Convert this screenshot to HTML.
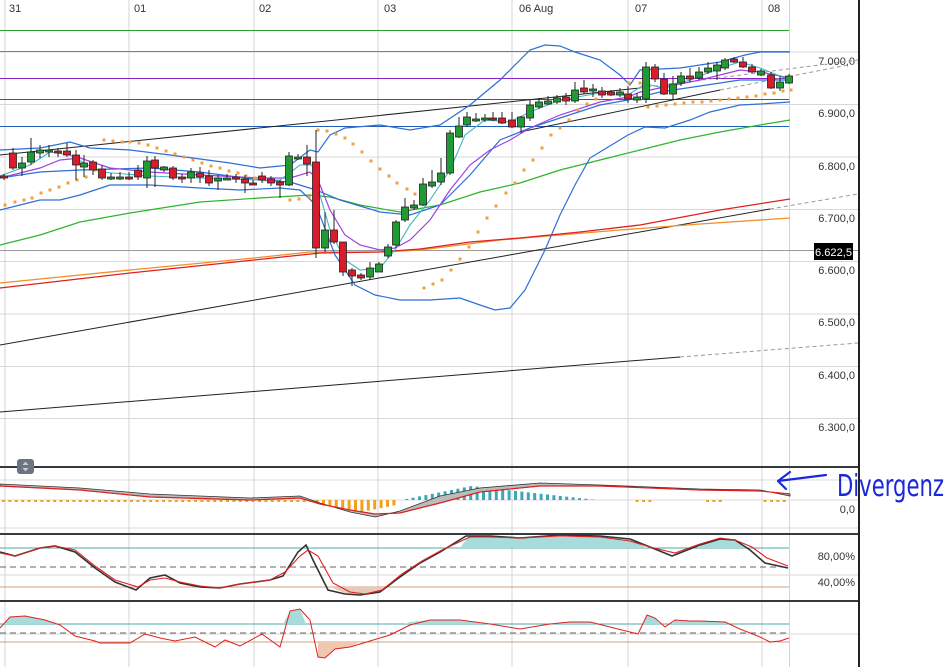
<!DOCTYPE html>
<html><head><meta charset="utf-8"><style>
html,body{margin:0;padding:0;background:#fff;width:946px;height:667px;overflow:hidden}
svg{display:block}
text{font-family:"Liberation Sans",sans-serif;font-size:11px;fill:#333}
</style></head><body>
<svg id="s" width="946" height="667" viewBox="0 0 946 667" xmlns="http://www.w3.org/2000/svg">
<rect width="946" height="667" fill="#fff"/>
<g stroke="#d4d4d8" stroke-width="1">
<line x1="5" y1="0" x2="5" y2="667"/><line x1="129" y1="0" x2="129" y2="667"/><line x1="254" y1="0" x2="254" y2="667"/><line x1="378" y1="0" x2="378" y2="667"/><line x1="512" y1="0" x2="512" y2="667"/><line x1="628" y1="0" x2="628" y2="667"/><line x1="762" y1="0" x2="762" y2="667"/><line x1="789.5" y1="0" x2="789.5" y2="667"/>
</g>
<g stroke="#d8d8d8" stroke-width="1">
<line x1="0" y1="52" x2="858" y2="52"/><line x1="0" y1="104.5" x2="858" y2="104.5"/><line x1="0" y1="157" x2="858" y2="157"/><line x1="0" y1="209.5" x2="858" y2="209.5"/><line x1="0" y1="261.5" x2="858" y2="261.5"/><line x1="0" y1="314" x2="858" y2="314"/><line x1="0" y1="366.5" x2="858" y2="366.5"/><line x1="0" y1="418.5" x2="858" y2="418.5"/>
<line x1="0" y1="480" x2="858" y2="480"/><line x1="0" y1="500" x2="858" y2="500"/><line x1="0" y1="528" x2="858" y2="528"/>
<line x1="0" y1="575" x2="858" y2="575"/><line x1="0" y1="634" x2="858" y2="634"/>
</g>
<line x1="0" y1="250.5" x2="858" y2="250.5" stroke="#999"/>
<line x1="0" y1="30.5" x2="789" y2="30.5" stroke="#2aa02a"/>
<line x1="0" y1="51.5" x2="789" y2="51.5" stroke="#2a9fb0"/>
<line x1="0" y1="78.5" x2="789" y2="78.5" stroke="#8a22c8"/>
<line x1="0" y1="99.5" x2="789" y2="99.5" stroke="#1f5fb8"/>
<line x1="0" y1="126.5" x2="789" y2="126.5" stroke="#1f5fb8"/>
<text x="9" y="12">31</text><text x="134" y="12">01</text><text x="259" y="12">02</text><text x="384" y="12">03</text><text x="519" y="12">06 Aug</text><text x="635" y="12">07</text><text x="768" y="12">08</text>
<g text-anchor="end">
<text x="855" y="65">7.000,0</text><text x="855" y="117">6.900,0</text><text x="855" y="170">6.800,0</text><text x="855" y="222">6.700,0</text><text x="855" y="274">6.600,0</text><text x="855" y="326">6.500,0</text><text x="855" y="379">6.400,0</text><text x="855" y="431">6.300,0</text>
<text x="855" y="513">0,0</text><text x="855" y="560">80,00%</text><text x="855" y="586">40,00%</text>
</g>
<rect x="814" y="243" width="39" height="17" fill="#000"/>
<text x="815" y="256" textLength="37" lengthAdjust="spacingAndGlyphs" style="fill:#fff;font-size:11px">6.622,5</text>
<g fill="none" stroke-width="1">
<polyline points="0,155 480,105 640,88" stroke="#222"/>
<polyline points="640,88 858,60" stroke="#999" stroke-dasharray="4,3"/>
<polyline points="520,132 720,90" stroke="#222"/>
<polyline points="720,90 858,63" stroke="#999" stroke-dasharray="4,3"/>
<polyline points="0,345 770,209" stroke="#222"/>
<polyline points="770,209 858,194" stroke="#999" stroke-dasharray="4,3"/>
<polyline points="0,412 680,357" stroke="#222"/>
<polyline points="680,357 858,343" stroke="#999" stroke-dasharray="4,3"/>
<polyline stroke="#f0902a" stroke-width="1.3" points="0,283 130,270 254,258 310,252 380,252 420,250 460,245 500,240 560,235 620,230 700,224 790,218"/>
<polyline stroke="#e02020" stroke-width="1.3" points="0,288 130,273 254,260 320,253 380,252 420,249 470,242 520,238 580,232 640,225 720,210 790,199"/>
<polyline stroke="#2db52d" stroke-width="1.2" points="0,245 40,235 80,222 130,213 200,202 260,198 310,195 330,197 360,205 400,212 440,205 480,192 520,183 560,170 600,160 640,150 680,140 720,132 760,125 790,120"/>
<polyline stroke="#2e6fd6" stroke-width="1.2" points="0,150 40,148 70,142 90,148 130,150 170,155 230,163 260,168 290,165 310,150 318,152 330,135 345,128 380,125 410,130 440,125 470,105 500,80 530,50 545,45 560,46 575,52 600,60 620,75 630,85 640,70 680,68 720,62 745,55 760,52 790,52"/>
<polyline stroke="#2e6fd6" stroke-width="1.2" points="0,210 20,205 40,200 60,200 80,195 110,185 150,185 200,188 240,190 280,188 300,190 316,205 335,255 355,285 375,295 400,300 430,300 460,298 480,305 495,310 510,308 525,290 545,250 560,215 575,185 590,158 628,135 645,127 665,128 690,120 710,112 740,105 760,104 790,102"/>
<polyline stroke="#2e6fd6" stroke-width="1.2" points="0,178 40,172 80,170 150,168 200,172 260,180 290,182 316,190 340,200 380,212 410,215 440,205 470,175 500,140 530,128 560,118 600,105 628,100 660,92 700,86 740,80 790,80"/>
<polyline stroke="#a040e0" stroke-width="1.2" points="0,178 40,168 60,160 80,158 110,168 150,172 200,175 260,178 290,178 310,172 318,180 330,210 345,235 360,245 380,250 395,248 410,240 430,220 450,190 470,165 490,150 510,140 530,128 560,115 600,102 628,97 640,92 660,88 700,80 740,70 760,72 790,78"/>
<polyline stroke="#40b8c0" stroke-width="1.1" points="0,176 30,165 50,152 70,155 100,172 150,176 200,178 260,180 280,180 300,165 312,165 320,195 330,230 345,260 360,270 380,268 395,250 410,225 430,200 450,170 465,135 485,120 510,122 530,112 560,100 600,93 628,95 645,84 665,88 690,80 720,68 740,62 760,68 790,80"/>
</g>
<g id="dots" fill="#f0a040"></g>
<g id="candles"></g>
<line x1="0" y1="467" x2="859" y2="467" stroke="#333a40" stroke-width="2"/>
<line x1="0" y1="534" x2="859" y2="534" stroke="#333a40" stroke-width="2"/>
<line x1="0" y1="601" x2="859" y2="601" stroke="#333a40" stroke-width="2"/>
<rect x="17" y="459" width="17" height="15" rx="3" fill="#6b7480"/>
<path d="M22.5 465 L25.5 461.5 L28.5 465 Z M22.5 468 L25.5 471.5 L28.5 468 Z" fill="#c8ccd2"/>
<g id="hist"></g>
<polygon fill="#bbb" stroke="#333" stroke-width="0.8" points="0,484 80,488 150,494 250,498 300,496 320,503 350,512 375,517 400,511 440,496 480,488 540,483 600,485 700,489 760,490 790,496 790,494 760,491 700,490 600,486 540,486 480,492 440,503 400,513 375,514 350,510 320,504 300,498 250,500 150,497 80,490 0,486"/>
<polyline fill="none" stroke="#e02020" stroke-width="1.2" points="0,486 80,490 150,497 250,500 300,498 320,504 350,510 375,514 400,513 440,503 480,492 540,486 600,486 700,490 760,491 790,494"/>
<line x1="0" y1="548" x2="789" y2="548" stroke="#4aa8a8"/>
<line x1="0" y1="567" x2="789" y2="567" stroke="#666" stroke-dasharray="6,4"/>
<line x1="0" y1="587" x2="789" y2="587" stroke="#d0a080"/>
<polygon fill="#a8dcdc" points="300,548 306,545 311,548 460,548 468,537 600,537 630,540 648,548 700,548 700,545 720,539 735,540 745,548"/>
<polygon fill="#e8c8b8" points="330,587 345,593 360,595 380,592 387,587"/>
<polyline fill="none" stroke="#333" stroke-width="1.6" points="0,552 15,556 40,548 55,546 75,552 95,568 115,582 136,590 150,578 165,575 180,583 200,587 220,588 240,584 270,580 283,576 298,552 306,545 313,560 328,590 345,594 360,595 380,592 400,577 420,563 440,552 466,536 490,536 520,538 560,535 600,536 630,539 650,547 672,556 700,545 720,539 735,540 750,550 765,563 788,568"/>
<polyline fill="none" stroke="#e02020" stroke-width="1.1" points="0,553 15,556 40,548 55,546 75,550 95,566 115,580 138,587 150,580 165,578 180,582 200,586 220,588 240,584 270,580 285,572 300,556 308,550 318,556 333,583 350,592 365,594 382,590 402,574 422,561 442,550 470,537 490,537 520,538 560,536 600,537 630,541 650,547 675,553 700,544 720,538 735,540 752,547 767,558 788,566"/>
<line x1="0" y1="624" x2="789" y2="624" stroke="#4aa8a8"/>
<line x1="0" y1="633" x2="789" y2="633" stroke="#666" stroke-dasharray="6,4"/>
<line x1="0" y1="642" x2="789" y2="642" stroke="#d0a080"/>
<polygon fill="#a8dcdc" points="3,624 10,617 25,616 45,620 55,624 283,624 290,611 300,609 306,624 404,624 410,622 430,620 460,620 490,624 520,624 550,624 570,622 590,622 600,624 643,624 647,615 655,618 660,624 672,624 675,620 690,621 700,621 725,622 728,624"/>
<polygon fill="#f0c8b0" points="318,642 318,657 325,658 335,649 350,647 360,642 764,642 770,643 780,642"/>
<polyline fill="none" stroke="#e02020" stroke-width="1" points="0,628 10,617 25,616 45,620 60,625 75,636 95,641 100,643 130,643 145,634 160,638 175,641 195,637 215,647 225,640 240,646 262,634 280,647 290,611 300,609 310,620 318,657 325,658 335,649 350,647 370,641 390,635 410,625 430,620 460,620 490,624 520,629 550,624 570,622 590,622 610,627 638,634 647,615 655,618 665,627 675,620 690,621 700,621 725,622 740,629 760,637 770,642 780,641 789,638"/>
<line x1="859" y1="0" x2="859" y2="667" stroke="#222" stroke-width="2"/>
<g stroke="#1a2ad8" stroke-width="2.2" fill="none" stroke-linecap="round">
<path d="M826 475 L778 481 M778 481 L790 472 M778 481 L786 489"/>
</g>
<text x="837" y="496" textLength="107" lengthAdjust="spacingAndGlyphs" style="font-family:'DejaVu Sans Condensed','DejaVu Sans',sans-serif;font-size:30px;fill:#1a2ad8;font-weight:normal">Divergenz</text>
</svg>
<script>
var NS="http://www.w3.org/2000/svg";
function el(p,t,a){var e=document.createElementNS(NS,t);for(var k in a)e.setAttribute(k,a[k]);p.appendChild(e);return e;}
var C=[[4,176,178,174,180,'r'],[13,153,168,148,170,'r'],[22,168,163,157,176,'g'],[31,162,152,138,165,'g'],[40,153,150,145,158,'g'],[49,152,150,145,157,'g'],[58,151,153,148,157,'r'],[67,151,155,143,157,'r'],[76,155,165,150,180,'r'],[84,167,163,155,177,'g'],[93,162,170,160,175,'r'],[102,169,178,165,180,'r'],[111,178,177,173,180,'g'],[120,178,177,172,180,'g'],[129,177,178,172,180,'r'],[138,170,177,165,180,'r'],[147,178,161,156,188,'g'],[155,160,168,156,187,'r'],[164,170,167,166,172,'g'],[173,168,178,166,180,'r'],[182,177,179,174,183,'r'],[191,178,172,168,183,'g'],[200,173,177,167,183,'r'],[209,176,183,170,186,'r'],[218,181,178,175,190,'g'],[227,180,178,174,180,'g'],[236,177,179,174,183,'r'],[245,179,183,175,193,'r'],[253,183,185,180,185,'r'],[262,176,180,172,183,'r'],[271,179,183,176,186,'r'],[280,182,185,180,198,'r'],[289,185,156,152,186,'g'],[298,159,157,154,160,'g'],[307,157,164,145,176,'r'],[316,162,248,130,258,'r'],[325,248,230,212,252,'g'],[334,230,242,210,244,'r'],[343,242,272,242,276,'r'],[352,270,276,268,286,'r'],[361,275,278,273,280,'r'],[370,277,268,262,280,'g'],[379,272,264,262,272,'g'],[388,256,247,244,258,'g'],[396,245,222,220,248,'g'],[405,220,207,198,222,'g'],[414,208,205,200,210,'g'],[423,205,184,178,206,'g'],[432,186,182,170,188,'g'],[441,182,173,158,185,'g'],[450,173,133,130,175,'g'],[459,137,126,117,138,'g'],[467,125,117,112,127,'g'],[476,121,119,113,122,'g'],[485,120,118,114,122,'g'],[493,118,119,112,121,'r'],[502,118,123,112,124,'r'],[512,120,127,112,128,'r'],[521,127,117,116,133,'g'],[530,118,105,100,121,'g'],[539,107,102,98,109,'g'],[548,104,101,96,105,'g'],[557,102,98,95,104,'g'],[566,97,101,93,105,'r'],[575,101,90,82,103,'g'],[584,88,92,80,94,'r'],[593,91,89,84,97,'g'],[602,91,95,87,98,'r'],[611,92,95,90,96,'r'],[620,95,92,88,97,'g'],[628,94,99,86,103,'r'],[637,100,97,93,103,'g'],[646,99,67,62,103,'g'],[655,67,79,64,82,'r'],[664,79,94,73,95,'r'],[673,94,84,76,100,'g'],[681,83,76,72,86,'g'],[690,76,79,68,82,'r'],[699,78,72,67,80,'g'],[708,72,68,62,74,'g'],[717,71,65,62,80,'g'],[725,68,60,58,70,'g'],[734,59,62,57,63,'r'],[743,62,67,57,68,'r'],[752,67,72,64,73,'r'],[761,75,71,69,76,'g'],[771,75,88,72,89,'r'],[780,88,82,76,91,'g'],[789,83,76,74,84,'g']];
var cg=document.getElementById('candles');
C.forEach(function(c){var x=c[0];el(cg,'line',{x1:x,x2:x,y1:c[3],y2:c[4],stroke:'#222','stroke-width':1});var t=Math.min(c[1],c[2]),h=Math.max(2,Math.abs(c[1]-c[2]));el(cg,'rect',{x:x-3.5,y:t,width:7,height:h,fill:c[5]=='g'?'#1f9a34':'#d81c2c',stroke:'#222','stroke-width':0.8});});
var D=[[5,205],[15,202],[24,200],[32,198],[41,193],[50,190],[59,187],[68,183],[77,180],[86,177],[95,170],[104,140],[113,141],[122,142],[130,142],[139,143],[148,145],[157,148],[166,151],[175,154],[184,157],[193,160],[202,163],[211,166],[220,168],[229,171],[238,173],[246,176],[255,178],[264,180],[273,181],[290,200],[299,199],[309,197],[318,130],[327,131],[336,134],[345,138],[353,144],[362,152],[371,161],[380,169],[389,176],[397,183],[407,189],[415,194],[424,288],[433,284],[442,280],[451,270],[460,259],[469,247],[478,232],[487,218],[496,206],[506,193],[515,183],[524,170],[533,160],[542,148],[551,135],[560,128],[569,120],[578,110],[587,104],[596,99],[629,83],[640,83],[648,107],[657,106],[666,105],[675,104],[684,103],[693,102],[702,102],[711,101],[720,100],[729,99],[738,98],[747,97],[756,96],[765,94],[774,93],[783,91],[791,90]];
var dg=document.getElementById('dots');
D.forEach(function(d){el(dg,'rect',{x:d[0]-1.5,y:d[1]-1.5,width:3,height:3});});
var hg=document.getElementById('hist');
for(var x=2;x<790;x+=6.4){var v=0,col='#f0a020';
if(x<310)v=2; else if(x<395)v=2+ (1-Math.abs(x-360)/50)*10; else if(x<405)v=0;
else if(x<595){col='#3aa8b8';v=-(x<470?(x-400)/70*14:14-(x-470)/125*14);}
else if(x>630&&x<650||x>700&&x<720||x>760&&x<785)v=2;
if(v>0)el(hg,'rect',{x:x,y:500,width:3,height:v,fill:col});else if(v<0)el(hg,'rect',{x:x,y:500+v,width:3,height:-v,fill:col});}
</script>
</body></html>
